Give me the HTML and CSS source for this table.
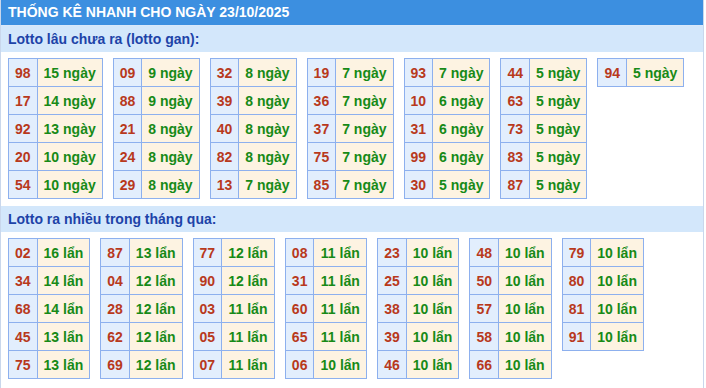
FILE: index.html
```html
<!DOCTYPE html>
<html lang="vi">
<head>
<meta charset="utf-8">
<title>Thống kê nhanh</title>
<link rel="stylesheet" href="styles.css">
</head>
<body>
<div class="box">
  <div class="head">THỐNG KÊ NHANH CHO NGÀY 23/10/2025</div>
  <div class="band">Lotto lâu chưa ra (lotto gan):</div>
  <div class="tables">
    <table class="lt"><tr><td class="n">98</td><td class="v">15 ngày</td></tr><tr><td class="n">17</td><td class="v">14 ngày</td></tr><tr><td class="n">92</td><td class="v">13 ngày</td></tr><tr><td class="n">20</td><td class="v">10 ngày</td></tr><tr><td class="n">54</td><td class="v">10 ngày</td></tr></table>
    <table class="lt"><tr><td class="n">09</td><td class="v">9 ngày</td></tr><tr><td class="n">88</td><td class="v">9 ngày</td></tr><tr><td class="n">21</td><td class="v">8 ngày</td></tr><tr><td class="n">24</td><td class="v">8 ngày</td></tr><tr><td class="n">29</td><td class="v">8 ngày</td></tr></table>
    <table class="lt"><tr><td class="n">32</td><td class="v">8 ngày</td></tr><tr><td class="n">39</td><td class="v">8 ngày</td></tr><tr><td class="n">40</td><td class="v">8 ngày</td></tr><tr><td class="n">82</td><td class="v">8 ngày</td></tr><tr><td class="n">13</td><td class="v">7 ngày</td></tr></table>
    <table class="lt"><tr><td class="n">19</td><td class="v">7 ngày</td></tr><tr><td class="n">36</td><td class="v">7 ngày</td></tr><tr><td class="n">37</td><td class="v">7 ngày</td></tr><tr><td class="n">75</td><td class="v">7 ngày</td></tr><tr><td class="n">85</td><td class="v">7 ngày</td></tr></table>
    <table class="lt"><tr><td class="n">93</td><td class="v">7 ngày</td></tr><tr><td class="n">10</td><td class="v">6 ngày</td></tr><tr><td class="n">31</td><td class="v">6 ngày</td></tr><tr><td class="n">99</td><td class="v">6 ngày</td></tr><tr><td class="n">30</td><td class="v">5 ngày</td></tr></table>
    <table class="lt"><tr><td class="n">44</td><td class="v">5 ngày</td></tr><tr><td class="n">63</td><td class="v">5 ngày</td></tr><tr><td class="n">73</td><td class="v">5 ngày</td></tr><tr><td class="n">83</td><td class="v">5 ngày</td></tr><tr><td class="n">87</td><td class="v">5 ngày</td></tr></table>
    <table class="lt"><tr><td class="n">94</td><td class="v">5 ngày</td></tr></table>
  </div>
  <div class="band">Lotto ra nhiều trong tháng qua:</div>
  <div class="tables">
    <table class="lt"><tr><td class="n">02</td><td class="v">16 lẩn</td></tr><tr><td class="n">34</td><td class="v">14 lẩn</td></tr><tr><td class="n">68</td><td class="v">14 lẩn</td></tr><tr><td class="n">45</td><td class="v">13 lẩn</td></tr><tr><td class="n">75</td><td class="v">13 lẩn</td></tr></table>
    <table class="lt"><tr><td class="n">87</td><td class="v">13 lẩn</td></tr><tr><td class="n">04</td><td class="v">12 lẩn</td></tr><tr><td class="n">28</td><td class="v">12 lẩn</td></tr><tr><td class="n">62</td><td class="v">12 lẩn</td></tr><tr><td class="n">69</td><td class="v">12 lẩn</td></tr></table>
    <table class="lt"><tr><td class="n">77</td><td class="v">12 lẩn</td></tr><tr><td class="n">90</td><td class="v">12 lẩn</td></tr><tr><td class="n">03</td><td class="v">11 lẩn</td></tr><tr><td class="n">05</td><td class="v">11 lẩn</td></tr><tr><td class="n">07</td><td class="v">11 lẩn</td></tr></table>
    <table class="lt"><tr><td class="n">08</td><td class="v">11 lẩn</td></tr><tr><td class="n">31</td><td class="v">11 lẩn</td></tr><tr><td class="n">60</td><td class="v">11 lẩn</td></tr><tr><td class="n">65</td><td class="v">11 lẩn</td></tr><tr><td class="n">06</td><td class="v">10 lẩn</td></tr></table>
    <table class="lt"><tr><td class="n">23</td><td class="v">10 lẩn</td></tr><tr><td class="n">25</td><td class="v">10 lẩn</td></tr><tr><td class="n">38</td><td class="v">10 lẩn</td></tr><tr><td class="n">39</td><td class="v">10 lẩn</td></tr><tr><td class="n">46</td><td class="v">10 lẩn</td></tr></table>
    <table class="lt"><tr><td class="n">48</td><td class="v">10 lẩn</td></tr><tr><td class="n">50</td><td class="v">10 lẩn</td></tr><tr><td class="n">57</td><td class="v">10 lẩn</td></tr><tr><td class="n">58</td><td class="v">10 lẩn</td></tr><tr><td class="n">66</td><td class="v">10 lẩn</td></tr></table>
    <table class="lt"><tr><td class="n">79</td><td class="v">10 lẩn</td></tr><tr><td class="n">80</td><td class="v">10 lẩn</td></tr><tr><td class="n">81</td><td class="v">10 lẩn</td></tr><tr><td class="n">91</td><td class="v">10 lẩn</td></tr></table>
  </div>
</div>
</body>
</html>
```
FILE: styles.css
```css
html, body {
  margin: 0;
  padding: 0;
  background: #ffffff;
}
body {
  font-family: "Liberation Sans", Arial, sans-serif;
  font-size: 14px;
  font-weight: bold;
}
.box {
  width: 702px;
  min-height: 388px;
  border-left: 1px solid #c9d7ec;
  border-right: 1px solid #c9d7ec;
}
.head {
  height: 25px;
  line-height: 25px;
  padding-left: 7px;
  background: #3c8fe0;
  color: #ffffff;
  border-bottom: 1px solid #d9e8fa;
}
.band {
  height: 26px;
  line-height: 26px;
  padding-left: 7px;
  background: #d3e7fb;
  color: #1d43a8;
}
.tables {
  display: flex;
  flex-wrap: wrap;
  align-items: flex-start;
  gap: 10px;
  padding: 6px 7px 7px;
}
.lt {
  border-collapse: collapse;
}
.lt td {
  border: 1px solid #8db0ee;
  height: 27px;
  padding: 0 6px;
  text-align: center;
  white-space: nowrap;
}
.lt .n {
  background: #e2eefd;
  color: #b8391c;
}
.lt .v {
  background: #fdf3e2;
  color: #178a17;
}
```
